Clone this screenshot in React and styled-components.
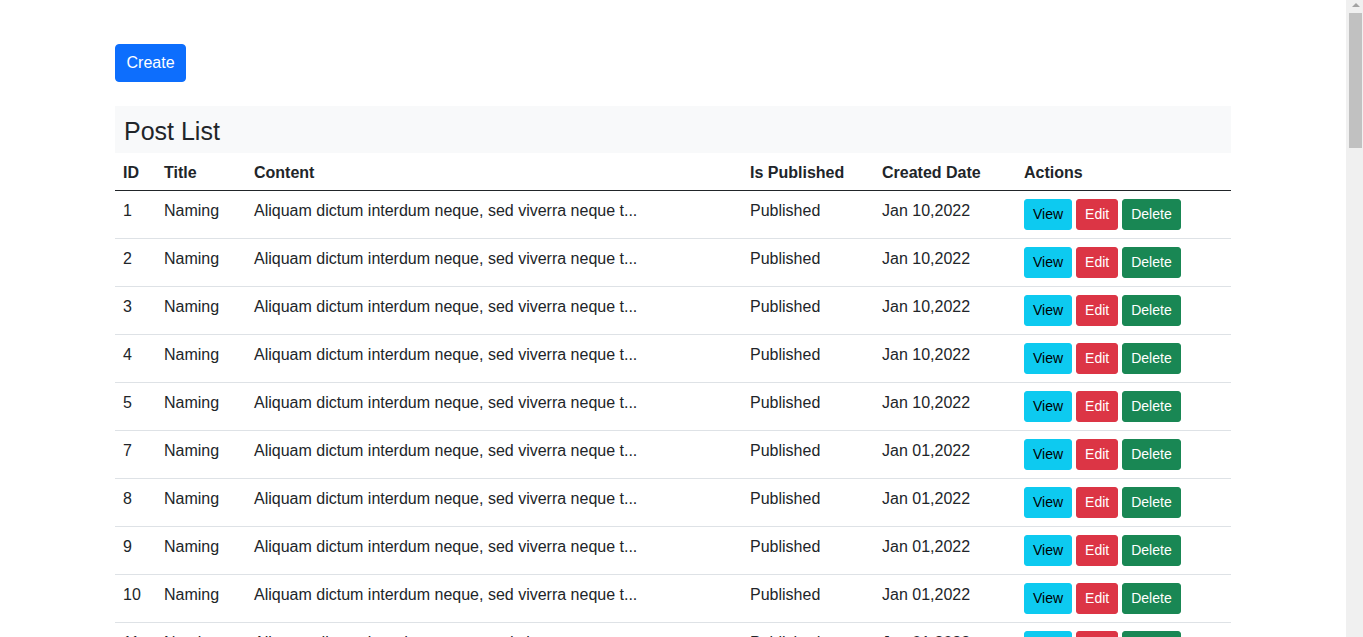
import React from "react";
import styled, { createGlobalStyle } from "styled-components";

const GlobalStyle = createGlobalStyle`
  *, *::before, *::after {
    box-sizing: border-box;
  }
  html, body {
    margin: 0;
    height: 100%;
    overflow: hidden;
  }
  body {
    font-family: "Liberation Sans", Arial, sans-serif;
    font-size: 16px;
    line-height: 1.5;
    color: #212529;
    background: #fff;
  }
`;

const Page = styled.div`
  display: flex;
  height: 100vh;
`;

const Main = styled.main`
  flex: 1;
  min-width: 0;
  overflow: hidden;
`;

// browser scrollbar as it shows in the screenshot
const ScrollTrack = styled.div`
  width: 17px;
  flex-shrink: 0;
  background: #f0f0f0;
  padding: 3px 1px 0 3px;
  display: flex;
  flex-direction: column;
`;

const ScrollArrow = styled.div`
  width: 0;
  height: 0;
  margin-left: 3px;
  border-left: 4px solid transparent;
  border-right: 4px solid transparent;
  border-bottom: 4px solid #a3a3a3;
`;

const ScrollThumb = styled.div`
  margin-top: 6px;
  height: 135px;
  background: #c1c1c1;
`;

const Container = styled.div`
  max-width: 1140px;
  margin: 0 auto;
  padding: 44px 12px 0;
`;

const Button = styled.button`
  display: inline-block;
  font-family: inherit;
  font-size: ${p => (p.$small ? "14px" : "16px")};
  line-height: 1.5;
  padding: ${p => (p.$small ? "4px 8px" : "6px 10.5px")};
  border-radius: ${p => (p.$small ? "3px" : "4px")};
  border: 1px solid ${p => p.$bg};
  background: ${p => p.$bg};
  color: ${p => p.$fg};
  cursor: pointer;
`;

const TitleBar = styled.div`
  margin-top: 24px;
  height: 47px;
  display: flex;
  align-items: center;
  padding: 2px 9px 0;
  background: #f8f9fa;
`;

const Title = styled.h3`
  margin: 0;
  font-size: 25px;
  font-weight: 500;
  line-height: 1.2;
`;

const Table = styled.table`
  width: 100%;
  border-collapse: collapse;
  table-layout: fixed;
`;

const Th = styled.th`
  text-align: left;
  font-weight: bold;
  padding: 8px 8px 5px;
  border-bottom: 1px solid #212529;
`;

const Td = styled.td`
  padding: 8px;
  vertical-align: top;
  border-bottom: 1px solid #dee2e6;
  white-space: nowrap;
  overflow: hidden;
`;

const Actions = styled.div`
  display: flex;
  gap: 4px;
`;

const columns = [
  { label: "ID", width: 41 },
  { label: "Title", width: 90 },
  { label: "Content", width: 496 },
  { label: "Is Published", width: 132 },
  { label: "Created Date", width: 142 },
  { label: "Actions", width: 215 },
];

const ids = [1, 2, 3, 4, 5, 7, 8, 9, 10, 11, 12];

const posts = ids.map(id => ({
  id,
  title: "Naming",
  content: "Aliquam dictum interdum neque, sed viverra neque t...",
  published: "Published",
  date: id <= 5 ? "Jan 10,2022" : "Jan 01,2022",
}));

export default function App() {
  return (
    <>
      <GlobalStyle />
      <Page>
        <Main>
          <Container>
            <Button $bg="#0d6efd" $fg="#fff">Create</Button>
            <TitleBar>
              <Title>Post List</Title>
            </TitleBar>
            <Table>
              <colgroup>
                {columns.map(c => <col key={c.label} width={c.width} />)}
              </colgroup>
              <thead>
                <tr>
                  {columns.map(c => <Th key={c.label}>{c.label}</Th>)}
                </tr>
              </thead>
              <tbody>
                {posts.map(post => (
                  <tr key={post.id}>
                    <Td>{post.id}</Td>
                    <Td>{post.title}</Td>
                    <Td>{post.content}</Td>
                    <Td>{post.published}</Td>
                    <Td>{post.date}</Td>
                    <Td>
                      <Actions>
                        <Button $small $bg="#0dcaf0" $fg="#000">View</Button>
                        <Button $small $bg="#dc3545" $fg="#fff">Edit</Button>
                        <Button $small $bg="#198754" $fg="#fff">Delete</Button>
                      </Actions>
                    </Td>
                  </tr>
                ))}
              </tbody>
            </Table>
          </Container>
        </Main>
        <ScrollTrack>
          <ScrollArrow />
          <ScrollThumb />
        </ScrollTrack>
      </Page>
    </>
  );
}
